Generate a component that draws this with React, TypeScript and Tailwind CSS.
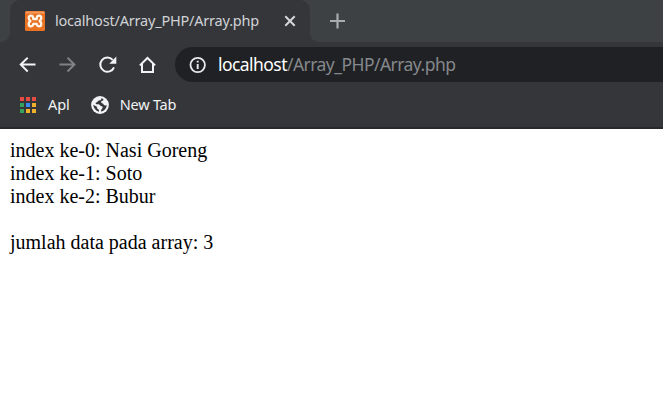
import React from "react";

const uiFont = "font-['Noto_Sans','Open_Sans',sans-serif]";

function XamppIcon() {
  return (
    <svg className="h-5 w-5 shrink-0" viewBox="0 0 20 20" fill="none">
      <rect width="20" height="20" rx="1.5" fill="#ea7223" />
      <path d="M0.5 1.5C.5.8.8.5 1.5.5h17c.7 0 1 .3 1 1v1H.5z" fill="#f39a5c" />
      <path
        d="M8.200 7.400C8.200 5.500 7.200 4.700 6 4.700 4.600 4.700 3.700 5.700 3.700 7.100c0 1.400.8 2.100 1.700 2.900-1 .8-1.700 1.500-1.700 2.900 0 1.400.9 2.400 2.300 2.400 1.400 0 2.200-.9 2.300-2.500h3.400c.1 1.600.9 2.500 2.300 2.500 1.400 0 2.300-1 2.300-2.400 0-1.400-.7-2.100-1.700-2.900.9-.8 1.700-1.500 1.700-2.900 0-1.400-.9-2.400-2.300-2.400-1.200 0-2.200.8-2.200 2.700v.6H8.200z"
        stroke="#fff6ea"
        strokeWidth="2.300"
        strokeLinejoin="round"
      />
    </svg>
  );
}

function BackIcon() {
  return (
    <svg className="h-5 w-5" viewBox="0 0 20 20" fill="none" stroke="#f1f3f4" strokeWidth="1.900">
      <path d="M18.500 9.500H4M10.700 2.700L3.700 9.500l7 7" />
    </svg>
  );
}

function ForwardIcon() {
  return (
    <svg className="h-5 w-5" viewBox="0 0 20 20" fill="none" stroke="#808286" strokeWidth="1.900">
      <path d="M2.500 9.500H17M10.500 2.700l7 6.800-7 7" />
    </svg>
  );
}

function ReloadIcon() {
  return (
    <svg className="h-5 w-5" viewBox="0 0 20 20" fill="none">
      <path d="M17 12.300A7.100 7.100 0 1 1 15.700 4.900" stroke="#f1f3f4" strokeWidth="2" />
      <path d="M19.300 1.500v7.200h-7z" fill="#f1f3f4" />
    </svg>
  );
}

function HomeIcon() {
  return (
    <svg className="h-5 w-5" viewBox="0 0 20 20" fill="none" stroke="#f1f3f4" strokeWidth="2">
      <path d="M2.900 10.400L10.500 3l7.600 7.400M5 8.800V17h11V8.800" />
    </svg>
  );
}

function InfoIcon() {
  return (
    <svg className="h-[18px] w-[18px] shrink-0" viewBox="0 0 18 18" fill="none">
      <circle cx="8.700" cy="9" r="7.200" stroke="#e8eaed" strokeWidth="1.800" />
      <path d="M8.700 8v5M8.700 4.700v1.900" stroke="#e8eaed" strokeWidth="1.900" />
    </svg>
  );
}

function GlobeIcon() {
  return (
    <svg className="h-[18px] w-[18px] shrink-0" viewBox="0 0 18 18" fill="none">
      <circle cx="9" cy="9" r="8.900" fill="#f1f3f4" />
      <path
        d="M10.300 2.300c.3 1.500-.8 2.200-2.300 2.200-1.300 0-1 1.500-2.100 1.700-1 .2-1.500.8-1.100 1.600.4.700 1.400.5 2.500.5 1.700 0 1.700 1.700 3.200 1.900 1 .1 1.500.9 1 1.900-.5 1.100-1.500 1.100-1.500 3.400 3.400-.7 5.700-3.400 5.700-6.300-.9-.2-1.300.5-2.300.1-1.100-.5-.6-1.700-1.800-1.900-1.500-.2-2-1.500-.9-2.300.8-.6 1.800-.6 1.800-1.700-.6-.6-1.400-1-2.200-1.100zM2.200 8.500c.2 3.700 2.500 6.200 5.800 7.200.3-1.500-.2-2.200-1.100-2.700-1.300-.7-.5-2.200-1.700-2.800-1-.5-2.100-.6-3-1.700z"
        fill="#35363a"
      />
    </svg>
  );
}

const appColors = [
  "bg-[#e84b43]", "bg-[#e84b43]", "bg-[#e84b43]",
  "bg-[#36a15b]", "bg-[#3b8cf0]", "bg-[#f2b12b]",
  "bg-[#36a15b]", "bg-[#f2b12b]", "bg-[#f2b12b]",
];

function TabStrip() {
  return (
    <div className="flex h-[42px] bg-[#35363a]">
      <div className="w-[10px] shrink-0 rounded-br-[9px] bg-[#3d4144]" />
      <div className="w-[300px] shrink-0 bg-[#3d4144]">
        <div className="flex h-full items-center rounded-t-[10px] bg-[#35363a] pl-[15px] pr-[14px]">
          <XamppIcon />
          <span className="ml-[10px] whitespace-nowrap text-[14.500px] tracking-[-0.2px] text-[#d0d2d6]">
            localhost/Array_PHP/Array.php
          </span>
          <svg className="ml-auto h-3 w-3" viewBox="0 0 12 12" stroke="#d5d7da" strokeWidth="2">
            <path d="M1.300 1.300l9.400 9.400M10.700 1.300l-9.400 9.400" />
          </svg>
        </div>
      </div>
      <div className="flex flex-1 items-center rounded-bl-[9px] bg-[#3d4144] pl-[19px]">
        <svg className="h-4 w-4" viewBox="0 0 16 16" stroke="#a9acaf" strokeWidth="2.200">
          <path d="M8.500 .5v15M1 8h15" />
        </svg>
      </div>
    </div>
  );
}

export default function App() {
  return (
    <div className={`flex h-[404px] w-full flex-col overflow-hidden bg-white ${uiFont}`}>
      <TabStrip />
      <div className="flex h-[45px] items-center bg-[#35363a] pl-[17px]">
        <div className="flex gap-5">
          <BackIcon />
          <ForwardIcon />
          <ReloadIcon />
          <HomeIcon />
        </div>
        <div className="ml-[18px] flex h-[35px] flex-1 items-center rounded-l-full bg-[#202124] pl-[14px]">
          <InfoIcon />
          <span className="ml-[11px] whitespace-nowrap text-[17.500px] tracking-[-0.540px] text-[#85888c]">
            <span className="tracking-[-0.560px] text-white">localhost</span>/Array_PHP/Array.php
          </span>
        </div>
      </div>
      <div className="flex h-[40px] items-center bg-[#35363a] pb-[5px] pl-5 text-[14.500px] text-[#f1f3f4]">
        <div className="grid grid-cols-3 gap-[2px]">
          {appColors.map((color, i) => (
            <div key={i} className={`h-[4px] w-[4px] ${color}`} />
          ))}
        </div>
        <span className="ml-[12px] tracking-[-0.1px]">Apl</span>
        <div className="ml-[21px]">
          <GlobeIcon />
        </div>
        <span className="ml-[11px] tracking-[-0.2px]">New Tab</span>
      </div>
      <div className="h-[2px] bg-[#28292c]" />
      <main className="pl-[10px] pt-[10px] font-['Liberation_Serif',serif] text-[20px] leading-[23px] text-black">
        <p>index ke-0: Nasi Goreng</p>
        <p>index ke-1: Soto</p>
        <p>index ke-2: Bubur</p>
        <p className="mt-[23px]">jumlah data pada array: 3</p>
      </main>
    </div>
  );
}
